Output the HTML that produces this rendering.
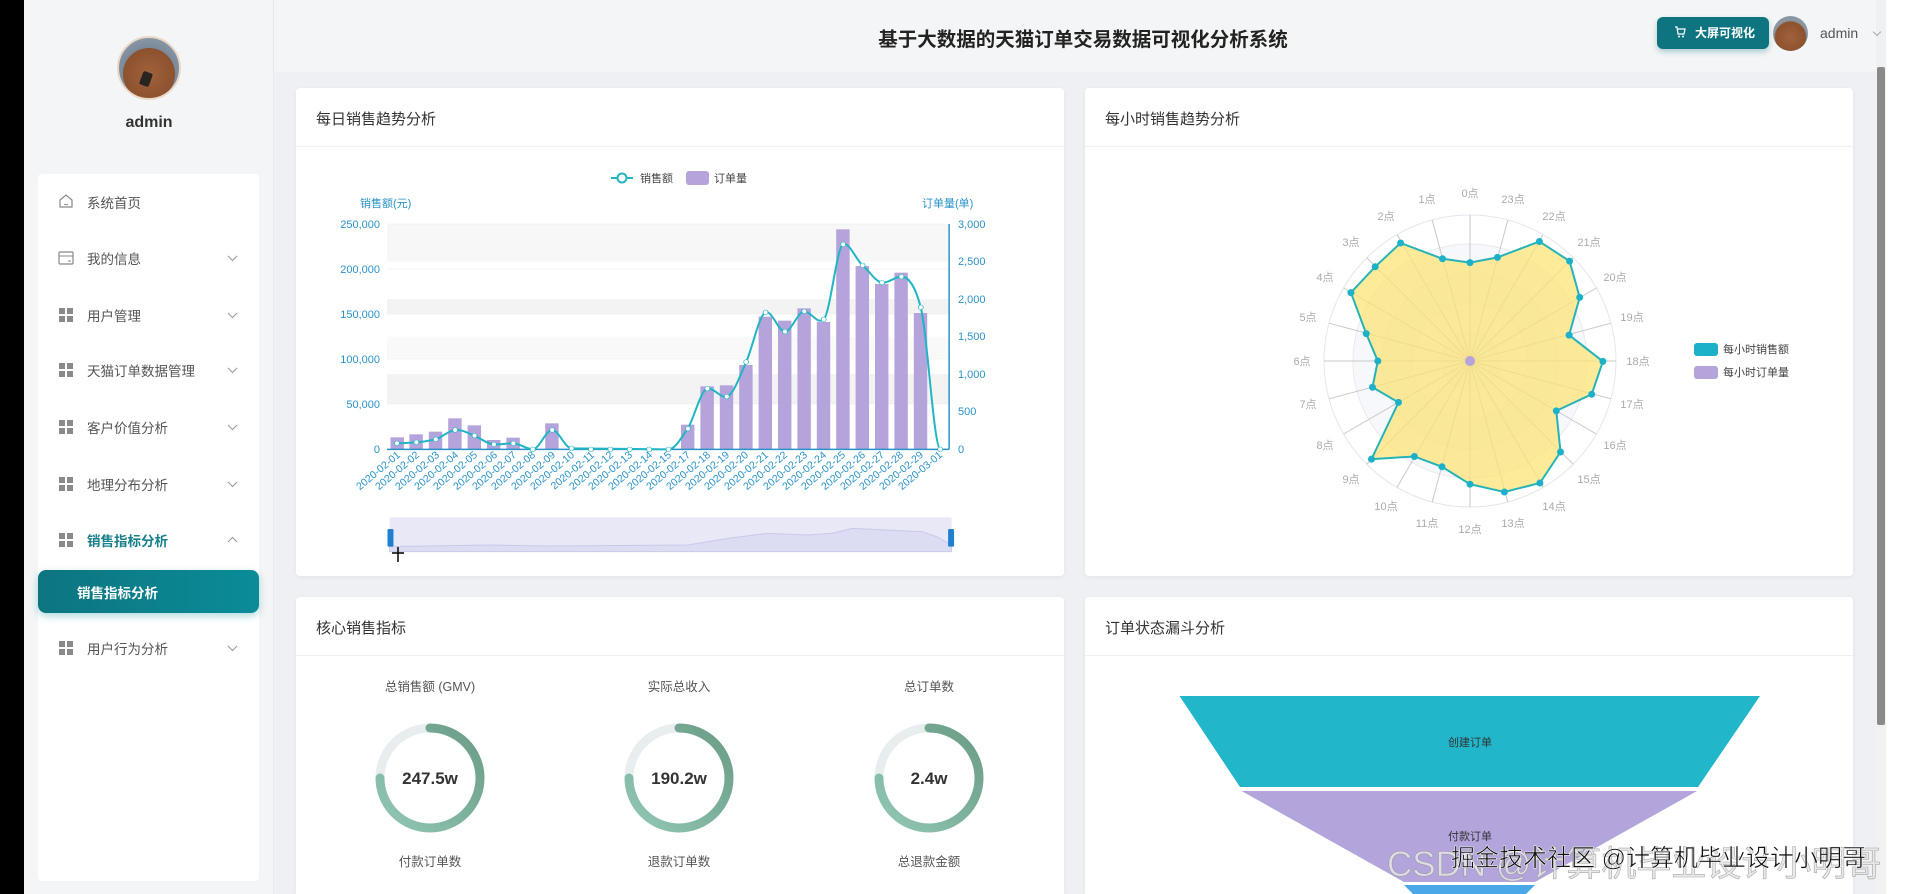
<!DOCTYPE html>
<html><head><meta charset="utf-8"><style>
*{margin:0;padding:0;box-sizing:border-box}
html{width:1910px;height:894px;overflow:hidden}
body{width:1910px;height:894px;overflow:hidden;background:#eef0f3;font-family:"Liberation Sans","Noto Sans CJK SC",sans-serif;position:relative;color:#333}
.abs{position:absolute}
#black{left:0;top:0;width:24px;height:894px;background:#000}
#side{left:24px;top:0;width:250px;height:894px;background:#f3f5f6;border-right:1px solid #e6e8ea}
#hdr{left:274px;top:0;width:1602px;height:72px;background:#f3f5f6}
.menu{left:38px;top:174px;width:221px;height:707px;background:#fff;border-radius:4px}
.mi{position:absolute;left:87px;font-size:13.5px;color:#555;transform:translateY(-50%)}
.chev{position:absolute;left:229px;width:7px;height:7px;border-right:1px solid #999;border-bottom:1px solid #999;transform:translateY(-75%) rotate(45deg)}
.card{background:#fff;border-radius:4px;box-shadow:0 1px 4px rgba(0,0,0,.06)}
.ct{position:absolute;left:20px;top:20px;font-size:15px;color:#333}
.cd{position:absolute;left:0;right:0;top:58px;border-top:1px solid #eef0f2}
</style></head><body>
<div id="black" class="abs"></div>
<div id="side" class="abs"></div>
<div id="hdr" class="abs"></div>
<div class="abs" style="left:117px;top:36px;width:64px;height:64px;border-radius:50%;background:radial-gradient(circle at 50% 60%,#a0623a 0,#8c522e 55%,#7a8a9a 56%,#9aa5b0 100%);border:2px solid #e9d9c9"></div>
<div class="abs" style="left:141px;top:72px;width:10px;height:14px;background:#2a2420;border-radius:2px;transform:rotate(20deg)"></div>
<div class="abs" style="left:0;width:298px;top:114px;text-align:center;font-weight:bold;font-size:16px;color:#333">admin</div>
<div class="abs menu"></div>
<svg class="abs" style="left:58px;top:193px" width="16" height="16" viewBox="0 0 16 16"><path d="M2 7 L8 2 L14 7 V14 H2 Z" fill="none" stroke="#888" stroke-width="1.2"/><path d="M6 11 Q8 12.5 10 11" fill="none" stroke="#888"/></svg>
<div class="mi" style="top:202px">系统首页</div>
<svg class="abs" style="left:58px;top:251px" width="16" height="14" viewBox="0 0 16 14"><rect x="1" y="1" width="14" height="12" rx="1" fill="none" stroke="#888" stroke-width="1.2"/><line x1="1" y1="5" x2="15" y2="5" stroke="#888"/><line x1="10" y1="10" x2="13" y2="10" stroke="#888"/></svg>
<div class="mi" style="top:258px">我的信息</div><div class="chev" style="top:258px"></div>
<div class="mi" style="top:315px">用户管理</div><div class="chev" style="top:315px"></div>
<div class="mi" style="top:370px">天猫订单数据管理</div><div class="chev" style="top:370px"></div>
<div class="mi" style="top:427px">客户价值分析</div><div class="chev" style="top:427px"></div>
<div class="mi" style="top:484px">地理分布分析</div><div class="chev" style="top:484px"></div>
<div class="mi" style="top:540px;color:#17808a;font-weight:bold">销售指标分析</div>
<div class="abs" style="left:229px;top:540px;width:7px;height:7px;border-left:1px solid #999;border-top:1px solid #999;transform:translateY(-25%) rotate(45deg)"></div>
<div class="abs" style="left:38px;top:570px;width:221px;height:43px;border-radius:8px;background:linear-gradient(90deg,#0d7580,#0a8c98);box-shadow:0 3px 8px rgba(20,150,160,.35)"></div>
<div class="abs" style="left:77px;top:592px;transform:translateY(-50%);color:#fff;font-weight:bold;font-size:13.5px">销售指标分析</div>
<div class="mi" style="top:648px">用户行为分析</div><div class="chev" style="top:648px"></div>
<svg class="abs" style="left:0;top:0" width="100" height="700">
<g fill="#8a8a8a">
<g transform="translate(59,308)"><rect width="6" height="6"/><rect x="8" width="6" height="6"/><rect y="8" width="6" height="6"/><rect x="8" y="8" width="6" height="6"/></g>
<g transform="translate(59,363)"><rect width="6" height="6"/><rect x="8" width="6" height="6"/><rect y="8" width="6" height="6"/><rect x="8" y="8" width="6" height="6"/></g>
<g transform="translate(59,420)"><rect width="6" height="6"/><rect x="8" width="6" height="6"/><rect y="8" width="6" height="6"/><rect x="8" y="8" width="6" height="6"/></g>
<g transform="translate(59,477)"><rect width="6" height="6"/><rect x="8" width="6" height="6"/><rect y="8" width="6" height="6"/><rect x="8" y="8" width="6" height="6"/></g>
<g transform="translate(59,533)"><rect width="6" height="6"/><rect x="8" width="6" height="6"/><rect y="8" width="6" height="6"/><rect x="8" y="8" width="6" height="6"/></g>
<g transform="translate(59,641)"><rect width="6" height="6"/><rect x="8" width="6" height="6"/><rect y="8" width="6" height="6"/><rect x="8" y="8" width="6" height="6"/></g>
</g></svg>

<div class="abs" style="left:783px;width:600px;top:23px;text-align:center;font-size:19.5px;font-weight:bold;color:#222">基于大数据的天猫订单交易数据可视化分析系统</div>
<div class="abs" style="left:1657px;top:17px;width:112px;height:32px;border-radius:6px;background:#0e7580;box-shadow:0 3px 6px rgba(14,117,128,.3);color:#fff;font-size:12px;font-weight:bold;line-height:32px;padding-left:38px">大屏可视化</div>
<svg class="abs" style="left:1674px;top:26px" width="12" height="12" viewBox="0 0 12 12"><path d="M1 1 H3 L4 8 H10 L11 3 H3.5" fill="none" stroke="#fff" stroke-width="1.2"/><circle cx="5" cy="10.5" r="1" fill="#fff"/><circle cx="9" cy="10.5" r="1" fill="#fff"/></svg>
<div class="abs" style="left:1773px;top:16px;width:35px;height:35px;border-radius:50%;background:radial-gradient(circle at 50% 60%,#a0623a 0,#8c522e 55%,#8a96a2 60%)"></div>
<div class="abs" style="left:1820px;top:25px;font-size:14px;color:#555">admin</div>
<div class="abs" style="left:1874px;top:29px;width:6px;height:6px;border-right:1px solid #aaa;border-bottom:1px solid #aaa;transform:rotate(45deg)"></div>
<div class="abs" style="left:1876px;top:66px;width:10px;height:828px;background:#f1f1f1"></div>
<div class="abs" style="left:1877px;top:67px;width:8px;height:658px;background:#8a8a8a;border-radius:2px"></div>
<div class="abs" style="left:1886px;top:0;width:24px;height:894px;background:#fff"></div>

<div class="abs card" style="left:296px;top:88px;width:768px;height:488px"><div class="ct">每日销售趋势分析</div><div class="cd"></div></div>
<div class="abs card" style="left:1085px;top:88px;width:768px;height:488px"><div class="ct">每小时销售趋势分析</div><div class="cd"></div></div>
<div class="abs card" style="left:296px;top:597px;width:768px;height:297px;border-radius:4px 4px 0 0"><div class="ct">核心销售指标</div><div class="cd"></div></div>
<div class="abs card" style="left:1085px;top:597px;width:768px;height:297px;border-radius:4px 4px 0 0"><div class="ct">订单状态漏斗分析</div><div class="cd"></div></div>

<svg class="abs" style="left:290px;top:150px" width="780" height="420" viewBox="0 0 1568 1260" preserveAspectRatio="none">
<rect x="195" y="222" width="1130" height="113" fill="#f7f7f7"/>
<rect x="195" y="447" width="1130" height="45" fill="#f3f3f3"/>
<rect x="195" y="560" width="1130" height="67" fill="#f9f9f9"/>
<rect x="195" y="672" width="1130" height="90" fill="#f3f3f3"/>
<g stroke="#e8e8e8" stroke-width="1" vector-effect="non-scaling-stroke">
<line x1="195" y1="222" x2="1325" y2="222"/><line x1="195" y1="357" x2="1325" y2="357"/><line x1="195" y1="492" x2="1325" y2="492"/><line x1="195" y1="627" x2="1325" y2="627"/><line x1="195" y1="762" x2="1325" y2="762"/>
</g>
<g fill="#b5a3dc">
<rect x="202" y="862" width="27" height="36"/><rect x="240" y="853" width="27" height="45"/><rect x="279" y="845" width="27" height="53"/><rect x="318" y="805" width="27" height="93"/><rect x="357" y="826" width="27" height="72"/><rect x="396" y="870" width="27" height="28"/><rect x="435" y="863" width="27" height="35"/>
<rect x="513" y="820" width="27" height="78"/>
<rect x="786" y="824" width="27" height="74"/><rect x="825" y="709" width="27" height="189"/><rect x="864" y="706" width="27" height="192"/><rect x="903" y="645" width="27" height="253"/><rect x="942" y="500" width="27" height="398"/><rect x="981" y="512" width="27" height="386"/><rect x="1020" y="475" width="27" height="423"/><rect x="1059" y="516" width="27" height="382"/><rect x="1098" y="238" width="27" height="660"/><rect x="1137" y="348" width="27" height="550"/><rect x="1176" y="402" width="27" height="496"/><rect x="1215" y="368" width="27" height="530"/><rect x="1254" y="489" width="27" height="409"/>
</g>
<line x1="195" y1="898" x2="1325" y2="898" stroke="#2a93c9" stroke-width="1.5" vector-effect="non-scaling-stroke"/>
<line x1="1325" y1="222" x2="1325" y2="898" stroke="#2a93c9" stroke-width="1.5" vector-effect="non-scaling-stroke"/>
<path fill="none" stroke="#22b5c4" stroke-width="2" vector-effect="non-scaling-stroke" d="M215,880 C235,879 240,878 254,877 C268,876 280,872 293,868 C306,862 318,842 332,840 C346,838 358,850 371,857 C384,866 397,882 410,883 C423,884 436,880 449,880 C462,880 475,898 488,898 C501,898 514,840 527,840 C540,840 553,895 566,895 L761,898 C775,898 787,860 800,836 C813,800 826,720 839,716 C852,712 865,745 878,740 C891,735 904,680 917,636 C930,592 943,495 956,487 C969,480 982,545 995,545 C1008,545 1021,484 1034,484 C1047,484 1060,525 1073,508 C1086,490 1099,290 1112,283 C1125,276 1138,330 1151,346 C1164,362 1177,395 1190,398 C1203,400 1216,380 1229,380 C1242,380 1255,400 1268,472 C1281,545 1294,890 1307,898"/>
<g fill="#fff" stroke="#22b5c4" stroke-width="1.5" vector-effect="non-scaling-stroke">
<ellipse cx="215" cy="880" rx="5" ry="7"/><ellipse cx="254" cy="877" rx="5" ry="7"/><ellipse cx="293" cy="868" rx="5" ry="7"/><ellipse cx="332" cy="840" rx="5" ry="7"/><ellipse cx="371" cy="857" rx="5" ry="7"/><ellipse cx="410" cy="883" rx="5" ry="7"/><ellipse cx="449" cy="880" rx="5" ry="7"/><ellipse cx="488" cy="898" rx="5" ry="7"/><ellipse cx="527" cy="840" rx="5" ry="7"/><ellipse cx="566" cy="895" rx="5" ry="7"/><ellipse cx="605" cy="898" rx="5" ry="7"/><ellipse cx="644" cy="898" rx="5" ry="7"/><ellipse cx="683" cy="898" rx="5" ry="7"/><ellipse cx="722" cy="898" rx="5" ry="7"/><ellipse cx="761" cy="898" rx="5" ry="7"/><ellipse cx="800" cy="836" rx="5" ry="7"/><ellipse cx="839" cy="716" rx="5" ry="7"/><ellipse cx="878" cy="740" rx="5" ry="7"/><ellipse cx="917" cy="636" rx="5" ry="7"/><ellipse cx="956" cy="487" rx="5" ry="7"/><ellipse cx="995" cy="545" rx="5" ry="7"/><ellipse cx="1034" cy="484" rx="5" ry="7"/><ellipse cx="1073" cy="508" rx="5" ry="7"/><ellipse cx="1112" cy="283" rx="5" ry="7"/><ellipse cx="1151" cy="346" rx="5" ry="7"/><ellipse cx="1190" cy="398" rx="5" ry="7"/><ellipse cx="1229" cy="380" rx="5" ry="7"/><ellipse cx="1268" cy="472" rx="5" ry="7"/><ellipse cx="1307" cy="898" rx="5" ry="7"/>
</g>
<rect x="200" y="1102" width="1130" height="103" fill="#e8e8f6"/>
<path d="M200 1190 L400 1185 L520 1188 L800 1185 L880 1165 L960 1150 L1040 1155 L1090 1150 L1130 1135 L1270 1145 L1300 1160 L1330 1185 L1330 1205 L200 1205Z" fill="#dcdcf2" stroke="#c9c9ea" stroke-width="1" vector-effect="non-scaling-stroke"/>
<rect x="196" y="1137" width="12" height="53" fill="#1f7fd0" rx="3"/><rect x="1323" y="1137" width="12" height="53" fill="#1f7fd0" rx="3"/>
</svg>

<svg class="abs" style="left:0;top:0" width="1910" height="894" font-family="Liberation Sans, Noto Sans CJK SC, sans-serif">
<line x1="611" y1="178" x2="633" y2="178" stroke="#22b5c4" stroke-width="2"/><circle cx="622" cy="178" r="4.5" fill="#fff" stroke="#22b5c4" stroke-width="2"/>
<text x="640" y="182" font-size="11" fill="#444">销售额</text>
<rect x="686" y="171" width="23" height="14" rx="3" fill="#b5a3dc"/>
<text x="714" y="182" font-size="11" fill="#444">订单量</text>
<g font-size="11" fill="#2a93c9">
<text x="360" y="207">销售额(元)</text><text x="922" y="207">订单量(单)</text>
<g text-anchor="end"><text x="380" y="228">250,000</text><text x="380" y="273">200,000</text><text x="380" y="318">150,000</text><text x="380" y="363">100,000</text><text x="380" y="408">50,000</text><text x="380" y="453">0</text></g>
<text x="958" y="228">3,000</text><text x="958" y="265">2,500</text><text x="958" y="303">2,000</text><text x="958" y="340">1,500</text><text x="958" y="378">1,000</text><text x="958" y="415">500</text><text x="958" y="453">0</text>
</g>
<g font-size="10.5" fill="#2a93c9" text-anchor="end">
<text transform="translate(401,456) rotate(-40)">2020-02-01</text><text transform="translate(420,456) rotate(-40)">2020-02-02</text><text transform="translate(440,456) rotate(-40)">2020-02-03</text><text transform="translate(459,456) rotate(-40)">2020-02-04</text><text transform="translate(478,456) rotate(-40)">2020-02-05</text><text transform="translate(498,456) rotate(-40)">2020-02-06</text><text transform="translate(517,456) rotate(-40)">2020-02-07</text><text transform="translate(536,456) rotate(-40)">2020-02-08</text><text transform="translate(556,456) rotate(-40)">2020-02-09</text><text transform="translate(575,456) rotate(-40)">2020-02-10</text><text transform="translate(595,456) rotate(-40)">2020-02-11</text><text transform="translate(614,456) rotate(-40)">2020-02-12</text><text transform="translate(633,456) rotate(-40)">2020-02-13</text><text transform="translate(653,456) rotate(-40)">2020-02-14</text><text transform="translate(672,456) rotate(-40)">2020-02-15</text><text transform="translate(691,456) rotate(-40)">2020-02-17</text><text transform="translate(711,456) rotate(-40)">2020-02-18</text><text transform="translate(730,456) rotate(-40)">2020-02-19</text><text transform="translate(749,456) rotate(-40)">2020-02-20</text><text transform="translate(769,456) rotate(-40)">2020-02-21</text><text transform="translate(788,456) rotate(-40)">2020-02-22</text><text transform="translate(808,456) rotate(-40)">2020-02-23</text><text transform="translate(827,456) rotate(-40)">2020-02-24</text><text transform="translate(846,456) rotate(-40)">2020-02-25</text><text transform="translate(866,456) rotate(-40)">2020-02-26</text><text transform="translate(885,456) rotate(-40)">2020-02-27</text><text transform="translate(904,456) rotate(-40)">2020-02-28</text><text transform="translate(924,456) rotate(-40)">2020-02-29</text><text transform="translate(943,456) rotate(-40)">2020-03-01</text>
</g>
<path d="M392 553 h12 M398 547 v15" stroke="#000" stroke-width="1.5"/>

<g transform="translate(1470,361)">
<circle r="146" fill="#fff" stroke="#e4e6ea"/>
<circle r="117" fill="#f7f8fb" stroke="#e8eaee"/>
<circle r="88" fill="#eef2f8" stroke="#e8eaee"/>
<circle r="58" fill="#f7f8fb" stroke="#e8eaee"/>
<circle r="29" fill="#eef2f8" stroke="#e8eaee"/>
<g stroke="#c8c8c8" stroke-width="1">
<line x2="0" y2="-146"/><line x2="-37.8" y2="-141"/><line x2="-73" y2="-126.4"/><line x2="-103.2" y2="-103.2"/><line x2="-126.4" y2="-73"/><line x2="-141" y2="-37.8"/><line x2="-146" y2="0"/><line x2="-141" y2="37.8"/><line x2="-126.4" y2="73"/><line x2="-103.2" y2="103.2"/><line x2="-73" y2="126.4"/><line x2="-37.8" y2="141"/><line x2="0" y2="146"/><line x2="37.8" y2="141"/><line x2="73" y2="126.4"/><line x2="103.2" y2="103.2"/><line x2="126.4" y2="73"/><line x2="141" y2="37.8"/><line x2="146" y2="0"/><line x2="141" y2="-37.8"/><line x2="126.4" y2="-73"/><line x2="103.2" y2="-103.2"/><line x2="73" y2="-126.4"/><line x2="37.8" y2="-141"/>
</g>
<polygon points="0,-98.4 -27.5,-102.2 -69.4,-118 -94.8,-94.3 -119.1,-68.4 -103.8,-27.4 -92.2,0 -97.5,26.3 -71.5,41.4 -98.5,98.1 -55.6,95.5 -28,105.8 0,123.2 34.4,131 69.9,122 90.5,91 86.3,49.9 121.7,33.3 132.9,0.4 99.1,-25.9 109.7,-63.6 99.6,-99.9 69.4,-119.5 27.5,-103.6" fill="rgba(252,228,120,.75)" stroke="#26b3b8" stroke-width="2"/>
<g fill="#1cb1c9">
<circle cx="0" cy="-98.4" r="3.5"/><circle cx="-27.5" cy="-102.2" r="3.5"/><circle cx="-69.4" cy="-118" r="3.5"/><circle cx="-94.8" cy="-94.3" r="3.5"/><circle cx="-119.1" cy="-68.4" r="3.5"/><circle cx="-103.8" cy="-27.4" r="3.5"/><circle cx="-92.2" cy="0" r="3.5"/><circle cx="-97.5" cy="26.3" r="3.5"/><circle cx="-71.5" cy="41.4" r="3.5"/><circle cx="-98.5" cy="98.1" r="3.5"/><circle cx="-55.6" cy="95.5" r="3.5"/><circle cx="-28" cy="105.8" r="3.5"/><circle cx="0" cy="123.2" r="3.5"/><circle cx="34.4" cy="131" r="3.5"/><circle cx="69.9" cy="122" r="3.5"/><circle cx="90.5" cy="91" r="3.5"/><circle cx="86.3" cy="49.9" r="3.5"/><circle cx="121.7" cy="33.3" r="3.5"/><circle cx="132.9" cy="0.4" r="3.5"/><circle cx="99.1" cy="-25.9" r="3.5"/><circle cx="109.7" cy="-63.6" r="3.5"/><circle cx="99.6" cy="-99.9" r="3.5"/><circle cx="69.4" cy="-119.5" r="3.5"/><circle cx="27.5" cy="-103.6" r="3.5"/>
</g>
<circle r="5" fill="#b5a3dc"/>
<g font-size="11" fill="#aaa" text-anchor="middle">
<text x="0" y="-164">0点</text><text x="-43" y="-158">1点</text><text x="-84" y="-141">2点</text><text x="-119" y="-115">3点</text><text x="-145" y="-80">4点</text><text x="-162" y="-40">5点</text><text x="-168" y="4">6点</text><text x="-162" y="47">7点</text><text x="-145" y="88">8点</text><text x="-119" y="122">9点</text><text x="-84" y="149">10点</text><text x="-43" y="166">11点</text><text x="0" y="172">12点</text><text x="43" y="166">13点</text><text x="84" y="149">14点</text><text x="119" y="122">15点</text><text x="145" y="88">16点</text><text x="162" y="47">17点</text><text x="168" y="4">18点</text><text x="162" y="-40">19点</text><text x="145" y="-80">20点</text><text x="119" y="-115">21点</text><text x="84" y="-141">22点</text><text x="43" y="-158">23点</text>
</g>
</g>
<rect x="1694" y="343" width="24" height="13" rx="3" fill="#1cb1c9"/><text x="1723" y="353" font-size="11" fill="#444">每小时销售额</text>
<rect x="1694" y="366" width="24" height="13" rx="3" fill="#b5a3dc"/><text x="1723" y="376" font-size="11" fill="#444">每小时订单量</text>

<defs><linearGradient id="gr" x1="1" y1="0" x2="0" y2="1"><stop offset="0" stop-color="#6a9b85"/><stop offset="1" stop-color="#91c8b4"/></linearGradient></defs>
<g font-size="12.5" fill="#555" text-anchor="middle">
<text x="430" y="691">总销售额 (GMV)</text><text x="679" y="691">实际总收入</text><text x="929" y="691">总订单数</text>
<text x="430" y="866">付款订单数</text><text x="679" y="866">退款订单数</text><text x="929" y="866">总退款金额</text>
</g>
<g fill="none" stroke-width="9" stroke-linecap="round">
<path d="M380 778 A50 50 0 0 1 430 728" stroke="#e8eef0"/><path d="M430 728 A50 50 0 1 1 380 778" stroke="url(#gr)"/>
<path d="M629 778 A50 50 0 0 1 679 728" stroke="#e8eef0"/><path d="M679 728 A50 50 0 1 1 629 778" stroke="url(#gr)"/>
<path d="M879 778 A50 50 0 0 1 929 728" stroke="#e8eef0"/><path d="M929 728 A50 50 0 1 1 879 778" stroke="url(#gr)"/>
</g>
<g font-size="17" font-weight="bold" fill="#333" text-anchor="middle">
<text x="430" y="784">247.5w</text><text x="679" y="784">190.2w</text><text x="929" y="784">2.4w</text>
</g>

<polygon points="1179.5,696 1760,696 1698,787 1240,787" fill="#22b6cb"/>
<polygon points="1241.5,791 1697,791 1535,882 1404,882" fill="#b4a4dc"/>
<polygon points="1404,885 1535,885 1526,894 1413,894" fill="#4aa8e8"/>
<g font-size="11" fill="#333" text-anchor="middle"><text x="1470" y="746">创建订单</text><text x="1470" y="840">付款订单</text></g>
<text x="1387" y="876" font-size="35" fill="#e6e6e6" stroke="#999" stroke-width=".6" opacity=".85">CSDN @计算机毕业设计小明哥</text>
<text x="1451" y="866" font-size="24" fill="#111" stroke="#fff" stroke-width=".5">掘金技术社区 @计算机毕业设计小明哥</text>
</svg>
</body></html>
